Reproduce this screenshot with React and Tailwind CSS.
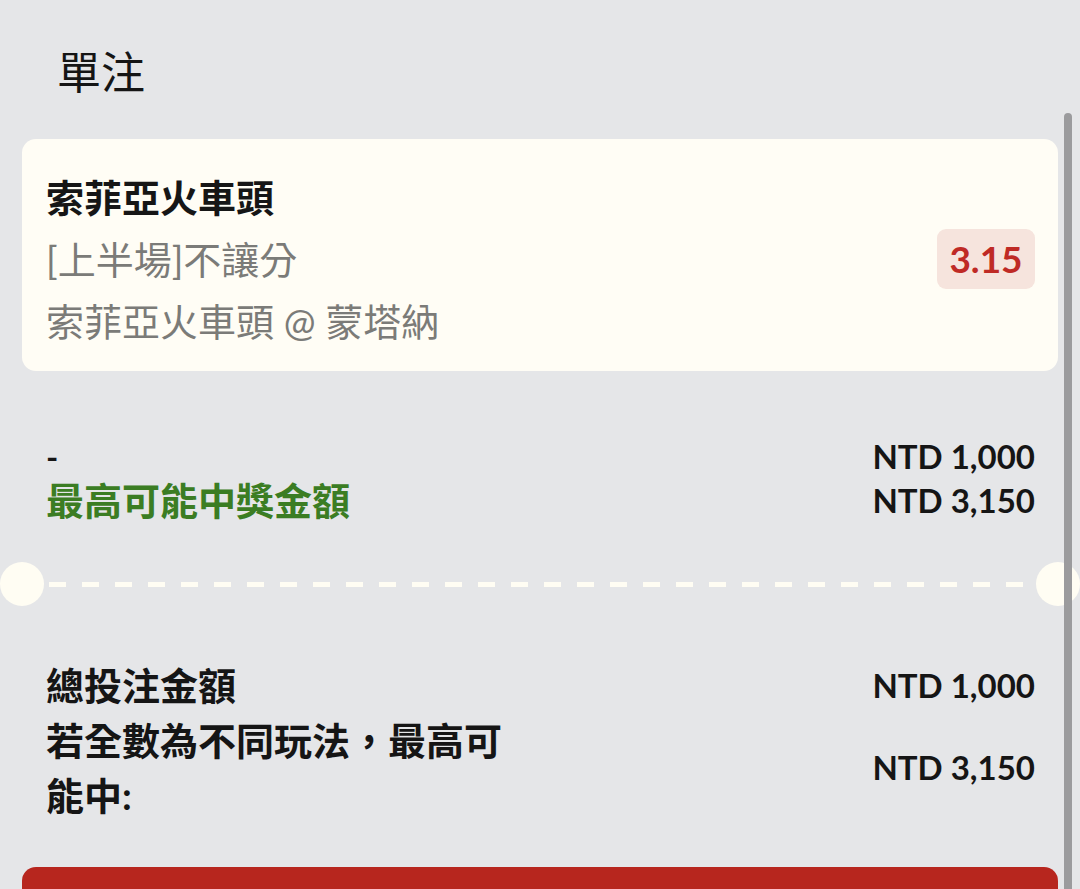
const FONT = "font-['Lato','Noto_Sans_CJK_TC',sans-serif]";

function BetCard() {
  return (
    <div className="mx-[22px] flex items-center justify-between rounded-[14px] bg-[#fffdf5] pl-[24px] pr-[23px] pt-[27px] pb-[19px]">
      <div className="flex flex-col text-[38px] leading-[62px]">
        <span className="font-bold text-[#161616]">索菲亞火車頭</span>
        <span className="text-[#7b7b78]">[上半場]不讓分</span>
        <span className="text-[#7b7b78]">索菲亞火車頭 @ 蒙塔納</span>
      </div>
      <div className="flex h-[60px] w-[98px] items-center justify-center rounded-[9px] bg-[#f6e4dd] text-[37px] font-bold text-[#bf2a25]">
        3.15
      </div>
    </div>
  );
}

function Divider() {
  return (
    <div className="relative flex h-[44px] items-center">
      <div className="h-[44px] w-[44px] shrink-0 rounded-full bg-[#fffdf3]" />
      <div className="mx-[5px] h-[5px] flex-1 bg-[repeating-linear-gradient(90deg,#fffdf3_0_17px,transparent_17px_33px)]" />
      <div className="mr-[-22px] h-[44px] w-[44px] shrink-0 rounded-full bg-[#fffdf3]" />
    </div>
  );
}

export default function App() {
  return (
    <div className={`${FONT} relative h-[889px] w-[1080px] overflow-hidden bg-[#e5e6e8]`}>
      <div className="pl-[57px] pt-[49px] pb-[44px] text-[44px] leading-[46px] text-[#151515]">單注</div>

      <BetCard />

      <div className="mt-[63px] flex justify-between pl-[46px] pr-[45px] text-[33px] font-bold leading-[44px]">
        <div className="flex flex-col">
          <span className="text-[#151515]">-</span>
          <span className="text-[38px] text-[#3b7d23]">最高可能中獎金額</span>
        </div>
        <div className="flex flex-col items-end text-[#151515]">
          <span>NTD 1,000</span>
          <span>NTD 3,150</span>
        </div>
      </div>

      <div className="mt-[40px] mr-[22px]">
        <Divider />
      </div>

      <div className="mt-[52px] flex justify-between pl-[46px] pr-[45px] font-bold text-[#151515]">
        <div className="flex w-[472px] flex-col text-[38px] leading-[55px]">
          <span>總投注金額</span>
          <span>若全數為不同玩法，最高可能中:</span>
        </div>
        <div className="flex flex-col items-end text-[33px]">
          <span className="leading-[55px]">NTD 1,000</span>
          <span className="flex h-[110px] items-center">NTD 3,150</span>
        </div>
      </div>

      <div className="mx-[22px] mt-[44px] h-[60px] rounded-t-[14px] bg-[#b7261e]" />

      <div className="absolute right-[8px] top-[113px] bottom-0 w-[8px] rounded-t-full bg-[#9b9b9d]" />
    </div>
  );
}
